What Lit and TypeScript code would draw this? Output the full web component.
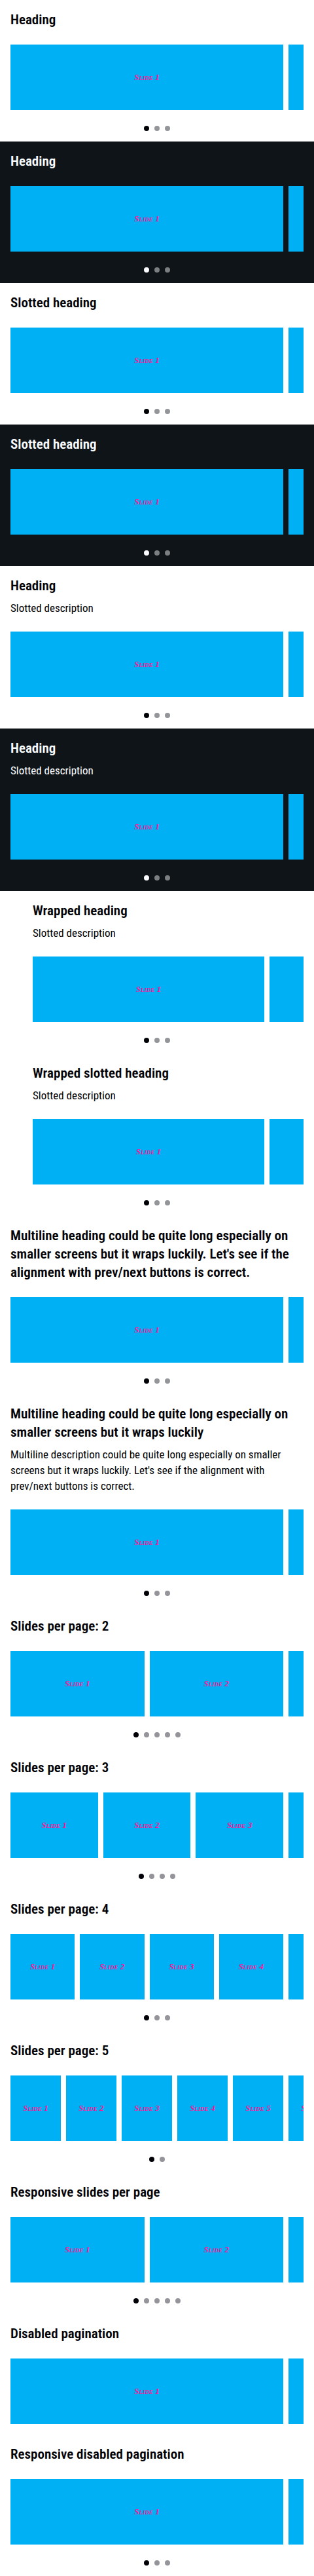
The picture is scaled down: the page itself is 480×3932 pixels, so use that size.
import { LitElement, html, css, nothing } from "lit";
import { customElement, property, state } from "lit/decorators.js";
import { classMap } from "lit/directives/class-map.js";
import { styleMap } from "lit/directives/style-map.js";

interface Example {
  heading: string;
  description?: string;
  perPage?: number;
  slides?: number;
  dark?: boolean;
  wrapped?: boolean;
  pagination?: boolean;
}

const LONG_HEADING =
  "Multiline heading could be quite long especially on smaller screens but it wraps luckily";

const EXAMPLES: Example[] = [
  { heading: "Heading" },
  { heading: "Heading", dark: true },
  { heading: "Slotted heading" },
  { heading: "Slotted heading", dark: true },
  { heading: "Heading", description: "Slotted description" },
  { heading: "Heading", description: "Slotted description", dark: true },
  { heading: "Wrapped heading", description: "Slotted description", wrapped: true },
  { heading: "Wrapped slotted heading", description: "Slotted description", wrapped: true },
  { heading: `${LONG_HEADING}. Let's see if the alignment with prev/next buttons is correct.` },
  {
    heading: LONG_HEADING,
    description:
      "Multiline description could be quite long especially on smaller screens but it wraps luckily. Let's see if the alignment with prev/next buttons is correct.",
  },
  { heading: "Slides per page: 2", perPage: 2, slides: 6 },
  { heading: "Slides per page: 3", perPage: 3, slides: 6 },
  { heading: "Slides per page: 4", perPage: 4, slides: 6 },
  { heading: "Slides per page: 5", perPage: 5, slides: 6 },
  { heading: "Responsive slides per page", perPage: 2, slides: 6 },
  { heading: "Disabled pagination", pagination: false },
  { heading: "Responsive disabled pagination" },
];

@customElement("demo-carousel")
class DemoCarousel extends LitElement {
  static styles = css`
    :host {
      --text: #010205;
      --dot: #949598;
      --start: 0px;
      --peek: 31px;
      display: block;
      padding: 16px;
      background: #fff;
      color: var(--text);
      font-family: "Roboto Condensed", Roboto, sans-serif;
    }
    :host([dark]) {
      --text: #fbfcff;
      --dot: #7c7f81;
      background: #0e1418;
    }
    :host([wrapped]) {
      --start: 34px;
      --peek: 60px;
    }
    .carousel {
      display: grid;
      grid-template-columns: minmax(0, 1fr);
      gap: 24px;
    }
    .header {
      display: grid;
      gap: 8px;
      padding-left: var(--start);
    }
    .heading,
    .description {
      margin: 0;
    }
    .heading {
      font-size: 21px;
      font-weight: 600;
      line-height: 28px;
    }
    .description {
      font-size: 17px;
      line-height: 24px;
    }
    .track {
      display: grid;
      grid-auto-flow: column;
      grid-auto-columns: calc((100% - var(--peek) - (var(--per-page) - 1) * 8px) / var(--per-page));
      gap: 8px;
      margin-left: var(--start);
      overflow: hidden;
    }
    .slide {
      display: flex;
      align-items: center;
      justify-content: center;
      height: 100px;
      background: #00b0f5;
      color: #ff1493;
      font: italic small-caps 700 13px "Liberation Serif", serif;
    }
    .away {
      visibility: hidden;
    }
    .pagination {
      display: flex;
      justify-content: center;
      gap: 8px;
    }
    .dot {
      width: 8px;
      height: 8px;
      padding: 0;
      border: 0;
      border-radius: 4px;
      background: var(--dot);
      cursor: pointer;
    }
    .active {
      background: var(--text);
    }
  `;

  @property() heading = "";
  @property() description = "";
  @property({ type: Number }) perPage = 1;
  @property({ type: Number }) slides = 3;
  @property({ type: Boolean }) pagination = true;
  @property({ type: Boolean, reflect: true }) dark = false;
  @property({ type: Boolean, reflect: true }) wrapped = false;
  @state() private page = 0;

  private goTo(page: number) {
    this.page = page;
    const track = this.renderRoot.querySelector(".track") as HTMLElement;
    const slide = track.children[page] as HTMLElement;
    track.scrollTo({
      left: slide.offsetLeft - (track.children[0] as HTMLElement).offsetLeft,
      behavior: "smooth",
    });
  }

  render() {
    const slides = Array.from({ length: this.slides }, (_, i) => i);
    const pages = Array.from({ length: this.slides - this.perPage + 1 }, (_, i) => i);
    // The slide after the current page peeks in; those beyond it stay hidden.
    const lastShown = this.page + this.perPage;
    return html`
      <section class="carousel" aria-label=${this.heading}>
        <div class="header">
          <h2 class="heading">${this.heading}</h2>
          ${this.description ? html`<p class="description">${this.description}</p>` : nothing}
        </div>
        <div class="track" style=${styleMap({ "--per-page": String(this.perPage) })}>
          ${slides.map(
            (i) => html`<div class=${classMap({ slide: true, away: i > lastShown })}>Slide ${i + 1}</div>`
          )}
        </div>
        ${this.pagination
          ? html`<div class="pagination">
              ${pages.map(
                (i) => html`<button
                  type="button"
                  class=${classMap({ dot: true, active: i === this.page })}
                  aria-label="Go to page ${i + 1}"
                  @click=${() => this.goTo(i)}
                ></button>`
              )}
            </div>`
          : nothing}
      </section>
    `;
  }
}

@customElement("app-root")
class AppRoot extends LitElement {
  static styles = css`
    :host {
      display: block;
      background: #fff;
    }
  `;

  render() {
    return EXAMPLES.map(
      (e) => html`<demo-carousel
        .heading=${e.heading}
        .description=${e.description ?? ""}
        .perPage=${e.perPage ?? 1}
        .slides=${e.slides ?? 3}
        .pagination=${e.pagination ?? true}
        .dark=${e.dark ?? false}
        .wrapped=${e.wrapped ?? false}
      ></demo-carousel>`
    );
  }
}
